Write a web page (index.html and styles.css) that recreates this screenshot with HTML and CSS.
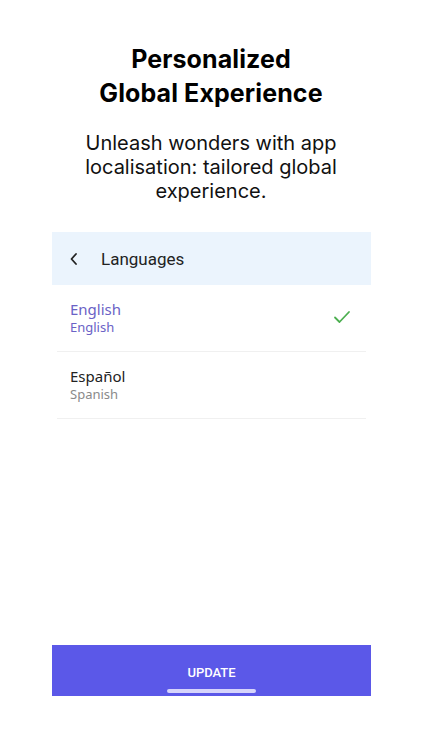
FILE: index.html
```html
<!DOCTYPE html>
<html lang="en">
<head>
    <meta charset="UTF-8">
    <meta name="viewport" content="width=device-width, initial-scale=1.0">
    <title>Personalized Global Experience</title>
    <link rel="stylesheet" href="styles.css">
</head>
<body>
    <div class="hero">
        <h1 class="title">Personalized<br>Global Experience</h1>
        <p class="subtitle">Unleash wonders with app<br>localisation: tailored global<br>experience.</p>
    </div>

    <div class="phone">
        <div class="topbar">
            <svg class="back" width="10" height="14" viewBox="0 0 10 14">
                <path d="M7 2 L2.5 7 L7 12" fill="none" stroke="#222" stroke-width="1.8" stroke-linecap="round" stroke-linejoin="round"/>
            </svg>
            <span class="topbar-title">Languages</span>
        </div>

        <div class="lang-list">
            <div class="lang-row selected">
                <div class="lang-text">
                    <div class="lang-name">English</div>
                    <div class="lang-sub">English</div>
                </div>
                <svg class="check" width="18" height="14" viewBox="0 0 18 14">
                    <path d="M2 7.5 L6.5 12 L16 2" fill="none" stroke="#4caf50" stroke-width="1.8" stroke-linecap="round" stroke-linejoin="round"/>
                </svg>
            </div>
            <div class="lang-row">
                <div class="lang-text">
                    <div class="lang-name">Español</div>
                    <div class="lang-sub">Spanish</div>
                </div>
            </div>
        </div>

        <div class="update-btn">
            <span>UPDATE</span>
            <div class="home-bar"></div>
        </div>
    </div>
</body>
</html>
```

FILE: styles.css
```css
* {
    margin: 0;
    padding: 0;
    box-sizing: border-box;
}

body {
    width: 422px;
    height: 750px;
    background-color: #ffffff;
    font-family: Inter, 'Liberation Sans', sans-serif;
    color: #000;
    overflow: hidden;
}

.hero {
    padding-top: 42px;
    text-align: center;
}

.title {
    font-size: 25px;
    line-height: 34px;
    font-weight: 700;
    letter-spacing: 0.1px;
}

.subtitle {
    margin-top: 21px;
    font-size: 20px;
    line-height: 24px;
    font-weight: 400;
    color: #111;
}

.phone {
    margin-top: 29px;
    margin-left: 52px;
    width: 319px;
    height: 464px;
    display: flex;
    flex-direction: column;
    font-family: 'Noto Sans', 'Open Sans', sans-serif;
}

.topbar {
    height: 53px;
    background-color: #ebf4fd;
    display: flex;
    align-items: center;
    padding-left: 17px;
}

.back {
    margin-right: 22px;
}

.topbar-title {
    font-family: Roboto, 'Noto Sans', sans-serif;
    font-size: 17px;
    font-weight: 400;
    color: #222;
}

.lang-list {
    flex: 1;
}

.lang-row {
    height: 67px;
    margin: 0 5px;
    padding: 0 13px;
    border-bottom: 1px solid #f0f0f0;
    display: flex;
    align-items: center;
    justify-content: space-between;
}

.lang-name {
    font-size: 15px;
    line-height: 19px;
    color: #222;
}

.lang-sub {
    font-size: 13px;
    line-height: 17px;
    color: #8a8a8a;
}

.selected .lang-name,
.selected .lang-sub {
    color: #6a62c6;
}

.check {
    margin-right: 2px;
    margin-top: -2px;
}

.update-btn {
    height: 51px;
    background-color: #5b58e8;
    color: #fff;
    display: flex;
    flex-direction: column;
    align-items: center;
    justify-content: flex-end;
    font-family: Roboto, 'Noto Sans', sans-serif;
    font-size: 13px;
    font-weight: 500;
}

.home-bar {
    margin-top: 9px;
    margin-bottom: 3px;
    width: 89px;
    height: 4px;
    border-radius: 2px;
    background-color: #d6d4fb;
}
```
